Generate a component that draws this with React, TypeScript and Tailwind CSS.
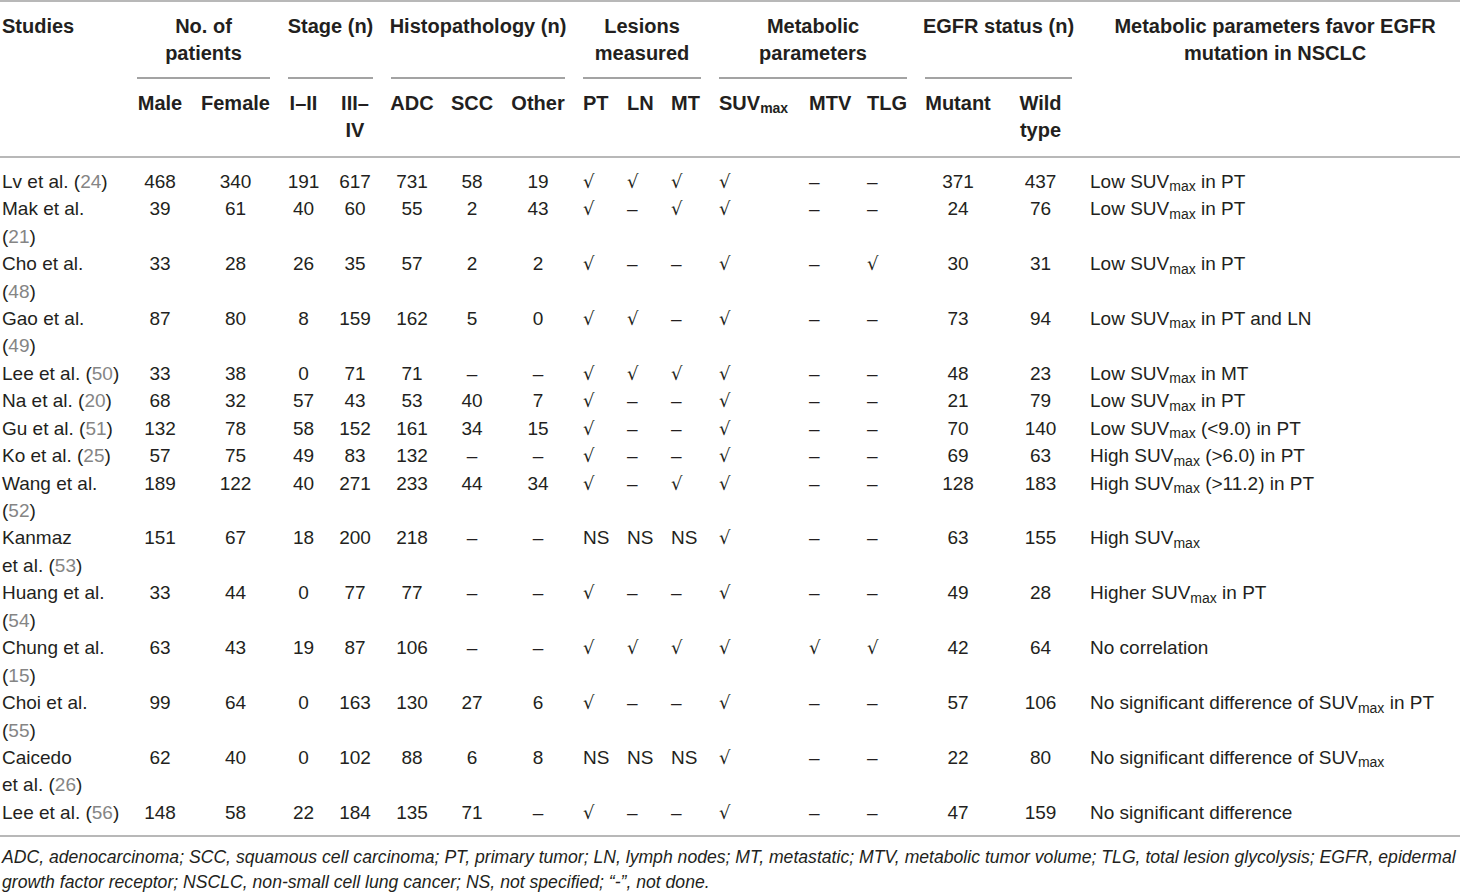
import React from 'react';

type Mark = string;

interface StudyRow {
  study: string[]; // '#' marks where the citation number goes
  cite: string;
  male: string;
  female: string;
  early: string;
  late: string;
  adc: string;
  scc: string;
  other: string;
  lesions: Mark[];
  metabolic: Mark[];
  mutant: string;
  wild: string;
  finding: string;
}

const COLS =
  'grid grid-cols-[128px_64px_87px_49px_54px_60px_60px_72px_44px_44px_48px_90px_58px_58px_84px_81px_1fr]';

const rows: StudyRow[] = [
  { study: ['Lv et al. (#)'], cite: '24', male: '468', female: '340', early: '191', late: '617', adc: '731', scc: '58', other: '19', lesions: ['√', '√', '√'], metabolic: ['√', '–', '–'], mutant: '371', wild: '437', finding: 'Low SUVmax in PT' },
  { study: ['Mak et al.', '(#)'], cite: '21', male: '39', female: '61', early: '40', late: '60', adc: '55', scc: '2', other: '43', lesions: ['√', '–', '√'], metabolic: ['√', '–', '–'], mutant: '24', wild: '76', finding: 'Low SUVmax in PT' },
  { study: ['Cho et al.', '(#)'], cite: '48', male: '33', female: '28', early: '26', late: '35', adc: '57', scc: '2', other: '2', lesions: ['√', '–', '–'], metabolic: ['√', '–', '√'], mutant: '30', wild: '31', finding: 'Low SUVmax in PT' },
  { study: ['Gao et al.', '(#)'], cite: '49', male: '87', female: '80', early: '8', late: '159', adc: '162', scc: '5', other: '0', lesions: ['√', '√', '–'], metabolic: ['√', '–', '–'], mutant: '73', wild: '94', finding: 'Low SUVmax in PT and LN' },
  { study: ['Lee et al. (#)'], cite: '50', male: '33', female: '38', early: '0', late: '71', adc: '71', scc: '–', other: '–', lesions: ['√', '√', '√'], metabolic: ['√', '–', '–'], mutant: '48', wild: '23', finding: 'Low SUVmax in MT' },
  { study: ['Na et al. (#)'], cite: '20', male: '68', female: '32', early: '57', late: '43', adc: '53', scc: '40', other: '7', lesions: ['√', '–', '–'], metabolic: ['√', '–', '–'], mutant: '21', wild: '79', finding: 'Low SUVmax in PT' },
  { study: ['Gu et al. (#)'], cite: '51', male: '132', female: '78', early: '58', late: '152', adc: '161', scc: '34', other: '15', lesions: ['√', '–', '–'], metabolic: ['√', '–', '–'], mutant: '70', wild: '140', finding: 'Low SUVmax (<9.0) in PT' },
  { study: ['Ko et al. (#)'], cite: '25', male: '57', female: '75', early: '49', late: '83', adc: '132', scc: '–', other: '–', lesions: ['√', '–', '–'], metabolic: ['√', '–', '–'], mutant: '69', wild: '63', finding: 'High SUVmax (>6.0) in PT' },
  { study: ['Wang et al.', '(#)'], cite: '52', male: '189', female: '122', early: '40', late: '271', adc: '233', scc: '44', other: '34', lesions: ['√', '–', '√'], metabolic: ['√', '–', '–'], mutant: '128', wild: '183', finding: 'High SUVmax (>11.2) in PT' },
  { study: ['Kanmaz', 'et al. (#)'], cite: '53', male: '151', female: '67', early: '18', late: '200', adc: '218', scc: '–', other: '–', lesions: ['NS', 'NS', 'NS'], metabolic: ['√', '–', '–'], mutant: '63', wild: '155', finding: 'High SUVmax' },
  { study: ['Huang et al.', '(#)'], cite: '54', male: '33', female: '44', early: '0', late: '77', adc: '77', scc: '–', other: '–', lesions: ['√', '–', '–'], metabolic: ['√', '–', '–'], mutant: '49', wild: '28', finding: 'Higher SUVmax in PT' },
  { study: ['Chung et al.', '(#)'], cite: '15', male: '63', female: '43', early: '19', late: '87', adc: '106', scc: '–', other: '–', lesions: ['√', '√', '√'], metabolic: ['√', '√', '√'], mutant: '42', wild: '64', finding: 'No correlation' },
  { study: ['Choi et al.', '(#)'], cite: '55', male: '99', female: '64', early: '0', late: '163', adc: '130', scc: '27', other: '6', lesions: ['√', '–', '–'], metabolic: ['√', '–', '–'], mutant: '57', wild: '106', finding: 'No significant difference of SUVmax in PT' },
  { study: ['Caicedo', 'et al. (#)'], cite: '26', male: '62', female: '40', early: '0', late: '102', adc: '88', scc: '6', other: '8', lesions: ['NS', 'NS', 'NS'], metabolic: ['√', '–', '–'], mutant: '22', wild: '80', finding: 'No significant difference of SUVmax' },
  { study: ['Lee et al. (#)'], cite: '56', male: '148', female: '58', early: '22', late: '184', adc: '135', scc: '71', other: '–', lesions: ['√', '–', '–'], metabolic: ['√', '–', '–'], mutant: '47', wild: '159', finding: 'No significant difference' },
];

function Suv() {
  return (
    <>
      SUV<sub className="text-[14px]">max</sub>
    </>
  );
}

function Finding({ text }: { text: string }) {
  const parts = text.split('SUVmax');
  return (
    <>
      {parts.map((p, i) => (
        <React.Fragment key={i}>
          {i > 0 && <Suv />}
          {p}
        </React.Fragment>
      ))}
    </>
  );
}

function StudyName({ lines, cite }: { lines: string[]; cite: string }) {
  return (
    <>
      {lines.map((line, i) => {
        const [before, after] = line.split('#');
        return (
          <React.Fragment key={i}>
            {i > 0 && <br />}
            {after === undefined ? (
              before
            ) : (
              <>
                {before}
                <span className="text-[#858585]">{cite}</span>
                {after}
              </>
            )}
          </React.Fragment>
        );
      })}
    </>
  );
}

// check marks are taller in the source, DejaVu's radical is closer
function MarkCell({ value }: { value: Mark }) {
  return (
    <div className="pl-[9px]">
      {value === '√' ? <span className="font-['DejaVu_Sans',sans-serif] text-[18px]">√</span> : value}
    </div>
  );
}

function GroupHead({ span, children }: { span: string; children: React.ReactNode }) {
  return (
    <div className={`${span} mx-[9px] border-b-2 border-[#a3a3a3] pt-[11px] pb-[9px]`}>
      <div className="-mx-[9px] whitespace-nowrap text-center">{children}</div>
    </div>
  );
}

export default function App() {
  return (
    <div className="w-[1460px] bg-white font-['Liberation_Sans',Arial,sans-serif] text-[#231f20]">
      {/* Header */}
      <div className="border-t-2 border-b-2 border-[#b8b8b8]">
        <div className={`${COLS} text-[20px] font-bold leading-[27.43px]`}>
          <div className="row-span-2 pl-[2px] pt-[11px]">Studies</div>
          <GroupHead span="col-span-2">
            No. of
            <br />
            patients
          </GroupHead>
          <GroupHead span="col-span-2">Stage (n)</GroupHead>
          <GroupHead span="col-span-3">Histopathology (n)</GroupHead>
          <GroupHead span="col-span-3">
            Lesions
            <br />
            measured
          </GroupHead>
          <GroupHead span="col-span-3">
            Metabolic
            <br />
            parameters
          </GroupHead>
          <GroupHead span="col-span-2">EGFR status (n)</GroupHead>
          <div className="row-span-2 whitespace-nowrap pl-[9px] pt-[11px] text-center">
            Metabolic parameters favor EGFR
            <br />
            mutation in NSCLC
          </div>

          <div className="pt-[11px] pb-[11px] text-center">Male</div>
          <div className="pt-[11px] pb-[11px] text-center">Female</div>
          <div className="pt-[11px] pb-[11px] text-center">I–II</div>
          <div className="pt-[11px] pb-[11px] text-center">
            III–
            <br />
            IV
          </div>
          <div className="pt-[11px] pb-[11px] text-center">ADC</div>
          <div className="pt-[11px] pb-[11px] text-center">SCC</div>
          <div className="pt-[11px] pb-[11px] text-center">Other</div>
          <div className="pl-[9px] pt-[11px] pb-[11px]">PT</div>
          <div className="pl-[9px] pt-[11px] pb-[11px]">LN</div>
          <div className="pl-[9px] pt-[11px] pb-[11px]">MT</div>
          <div className="whitespace-nowrap pl-[9px] pt-[11px] pb-[11px]">
            <Suv />
          </div>
          <div className="pl-[9px] pt-[11px] pb-[11px]">MTV</div>
          <div className="pl-[9px] pt-[11px] pb-[11px]">TLG</div>
          <div className="pt-[11px] pb-[11px] text-center">Mutant</div>
          <div className="pt-[11px] pb-[11px] text-center">
            Wild
            <br />
            type
          </div>
        </div>
      </div>

      {/* Body */}
      <div className="border-b-2 border-[#b8b8b8] pt-[10px] pb-[9px] text-[19px] leading-[27.43px]">
        {rows.map((r, i) => (
          <div key={i} className={COLS}>
            <div className="whitespace-nowrap pl-[2px]">
              <StudyName lines={r.study} cite={r.cite} />
            </div>
            <div className="text-center">{r.male}</div>
            <div className="text-center">{r.female}</div>
            <div className="text-center">{r.early}</div>
            <div className="text-center">{r.late}</div>
            <div className="text-center">{r.adc}</div>
            <div className="text-center">{r.scc}</div>
            <div className="text-center">{r.other}</div>
            {r.lesions.map((m, j) => (
              <MarkCell key={`l${j}`} value={m} />
            ))}
            {r.metabolic.map((m, j) => (
              <MarkCell key={`m${j}`} value={m} />
            ))}
            <div className="text-center">{r.mutant}</div>
            <div className="text-center">{r.wild}</div>
            <div className="whitespace-nowrap pl-[9px]">
              <Finding text={r.finding} />
            </div>
          </div>
        ))}
      </div>

      {/* Footnote */}
      <p className="whitespace-nowrap pl-[2px] pt-[8px] text-[17.63px] italic leading-[25px]">
        ADC, adenocarcinoma; SCC, squamous cell carcinoma; PT, primary tumor; LN, lymph nodes; MT, metastatic; MTV, metabolic tumor volume; TLG, total lesion glycolysis; EGFR, epidermal
        <br />
        growth factor receptor; NSCLC, non-small cell lung cancer; NS, not specified; “-”, not done.
      </p>
    </div>
  );
}
